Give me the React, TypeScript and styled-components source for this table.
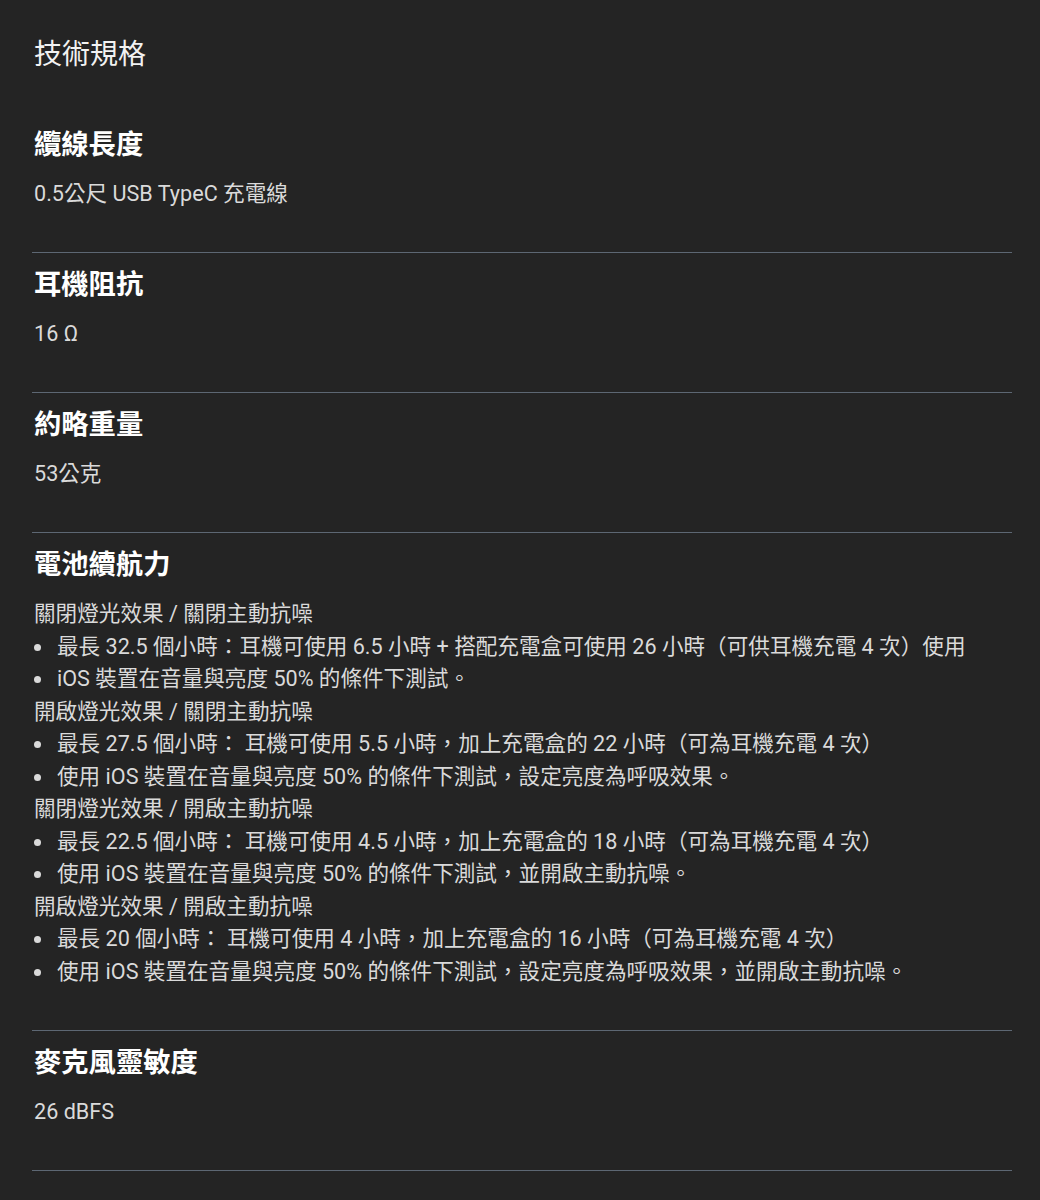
import React from 'react'
import styled, { createGlobalStyle } from 'styled-components'

const GlobalStyle = createGlobalStyle`
  html, body {
    margin: 0;
    padding: 0;
    background: #242424;
  }
  body {
    font-family: Roboto, "Noto Sans CJK TC", "Noto Sans", sans-serif;
    color: #dcdcdc;
  }
`

const Page = styled.main`
  min-height: 1200px;
  padding: 35px 28px 0 32px;
  box-sizing: border-box;
  background: #242424;
`

const Title = styled.h1`
  margin: 0 0 38px 2px;
  font-size: 28px;
  line-height: 40px;
  font-weight: 400;
  color: #f2f2f2;
`

const Section = styled.section`
  padding: 14px 0 41.5px 2px;
  border-bottom: 1.5px solid #5d6773;
`

const Heading = styled.h2`
  margin: 0 0 15px;
  font-size: 27.3px;
  line-height: 36px;
  font-weight: 700;
  color: #ffffff;
`

const Text = styled.p`
  margin: 0;
  font-size: 21.6px;
  line-height: 32.5px;
  color: #dadada;
`

const List = styled.ul`
  margin: 0;
  padding: 0;
  list-style: none;
`

const Item = styled.li`
  position: relative;
  padding-left: 23px;
  font-size: 21.6px;
  line-height: 32.5px;
  color: #dadada;

  &::before {
    content: "";
    position: absolute;
    left: 0;
    top: 13px;
    width: 7px;
    height: 7px;
    border-radius: 50%;
    background: #dadada;
  }
`

type Spec = {
  title: string
  value?: string
  groups?: { label: string; items: string[] }[]
}

const specs: Spec[] = [
  { title: '纜線長度', value: '0.5公尺 USB TypeC 充電線' },
  { title: '耳機阻抗', value: '16 Ω' },
  { title: '約略重量', value: '53公克' },
  {
    title: '電池續航力',
    groups: [
      {
        label: '關閉燈光效果 / 關閉主動抗噪',
        items: [
          '最長 32.5 個小時：耳機可使用 6.5 小時 + 搭配充電盒可使用 26 小時（可供耳機充電 4 次）使用',
          'iOS 裝置在音量與亮度 50% 的條件下測試。',
        ],
      },
      {
        label: '開啟燈光效果 / 關閉主動抗噪',
        items: [
          '最長 27.5 個小時： 耳機可使用 5.5 小時，加上充電盒的 22 小時（可為耳機充電 4 次）',
          '使用 iOS 裝置在音量與亮度 50% 的條件下測試，設定亮度為呼吸效果。',
        ],
      },
      {
        label: '關閉燈光效果 / 開啟主動抗噪',
        items: [
          '最長 22.5 個小時： 耳機可使用 4.5 小時，加上充電盒的 18 小時（可為耳機充電 4 次）',
          '使用 iOS 裝置在音量與亮度 50% 的條件下測試，並開啟主動抗噪。',
        ],
      },
      {
        label: '開啟燈光效果 / 開啟主動抗噪',
        items: [
          '最長 20 個小時： 耳機可使用 4 小時，加上充電盒的 16 小時（可為耳機充電 4 次）',
          '使用 iOS 裝置在音量與亮度 50% 的條件下測試，設定亮度為呼吸效果，並開啟主動抗噪。',
        ],
      },
    ],
  },
  { title: '麥克風靈敏度', value: '26 dBFS' },
]

export default function App() {
  return (
    <Page lang="zh-TW">
      <GlobalStyle />
      <Title>技術規格</Title>
      {specs.map((spec) => (
        <Section key={spec.title}>
          <Heading>{spec.title}</Heading>
          {spec.value && <Text>{spec.value}</Text>}
          {spec.groups &&
            spec.groups.map((group) => (
              <React.Fragment key={group.label}>
                <Text>{group.label}</Text>
                <List>
                  {group.items.map((item) => (
                    <Item key={item}>{item}</Item>
                  ))}
                </List>
              </React.Fragment>
            ))}
        </Section>
      ))}
    </Page>
  )
}
